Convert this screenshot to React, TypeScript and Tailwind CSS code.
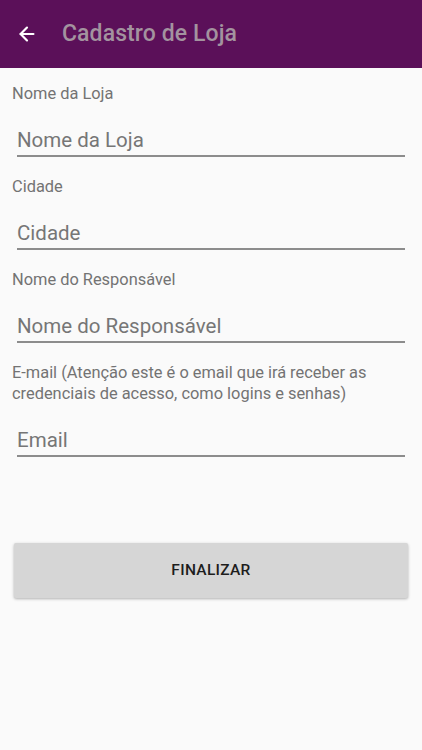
import { ArrowLeft } from 'lucide-react'

const FIELDS: { label: string; placeholder: string }[] = [
  { label: 'Nome da Loja', placeholder: 'Nome da Loja' },
  { label: 'Cidade', placeholder: 'Cidade' },
  { label: 'Nome do Responsável', placeholder: 'Nome do Responsável' },
  { label: 'E-mail (Atenção este é o email que irá receber as credenciais de acesso, como logins e senhas)', placeholder: 'Email' },
]

export default function App() {
  return (
    <div className="w-[422px] h-[750px] bg-[#fafafa] flex flex-col" style={{ fontFamily: 'Roboto, "Noto Sans", sans-serif' }}>

      {/* Toolbar */}
      <div className="h-[68px] bg-[#5b1059] flex items-center shrink-0">
        <ArrowLeft className="w-[22px] h-[22px] text-white ml-[16px]" strokeWidth={2.4} />
        <h1 className="ml-[24px] text-[23px] font-medium text-[#a3939f] tracking-[0.1px]">Cadastro de Loja</h1>
      </div>

      {/* Form */}
      <div className="flex flex-col pt-[15px]">
        {FIELDS.map(f => (
          <div key={f.placeholder} className="flex flex-col mb-[19px]">
            <p className="px-[12px] pr-[30px] text-[16.4px] leading-[21px] text-[#737373]">{f.label}</p>
            <div className="mx-[17px] w-[388px] mt-[22px] border-b-2 border-[#8c8c8c]">
              <input
                type="text"
                placeholder={f.placeholder}
                className="w-full bg-transparent outline-none text-[20.5px] leading-[28px] pb-[1px] text-[#222] placeholder:text-[#767676]"
              />
            </div>
          </div>
        ))}
      </div>

      {/* Button */}
      <div className="px-[14px] mt-[67px]">
        <button className="w-[394px] h-[55px] rounded-[2px] bg-[#d6d6d6] shadow-[0_1px_3px_rgba(0,0,0,0.3)] text-[15.5px] font-medium text-[#1d1d1d] tracking-[0.3px]">
          FINALIZAR
        </button>
      </div>
    </div>
  )
}
